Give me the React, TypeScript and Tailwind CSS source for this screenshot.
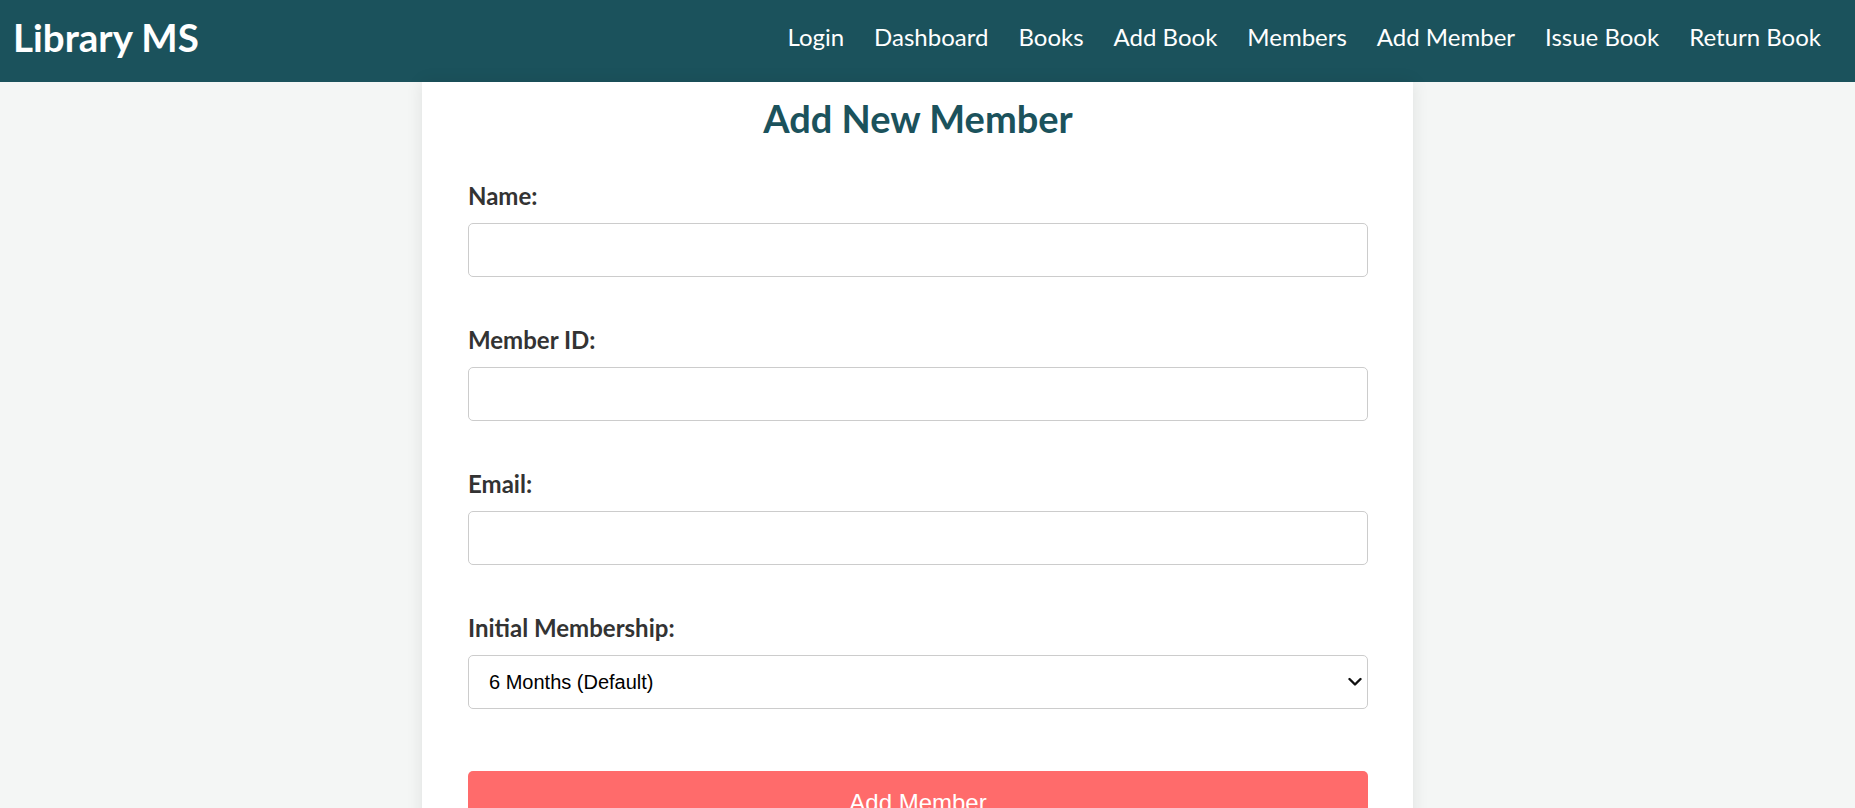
const links = [
  "Login",
  "Dashboard",
  "Books",
  "Add Book",
  "Members",
  "Add Member",
  "Issue Book",
  "Return Book",
];

function Field({ label, type = "text" }: { label: string; type?: string }) {
  return (
    <div className="mb-[48px]">
      <label className="block text-[24px] font-bold leading-[30px] text-[#333]">
        {label}
      </label>
      <input
        type={type}
        className="mt-[12px] block h-[54px] w-full rounded-[5px] border border-[#cccccc] bg-white px-[15px] font-['Liberation_Sans',Arial,sans-serif] text-[20px] text-black outline-none"
      />
    </div>
  );
}

export default function App() {
  return (
    <div className="h-[808px] overflow-hidden bg-[#f4f6f5] font-['Lato',sans-serif]">
      <nav className="flex h-[82px] items-center justify-between bg-[#1b525c] pb-[8px] pl-[13px] pr-[34px]">
        <div className="text-[38.5px] font-bold leading-none text-white">
          Library MS
        </div>
        <ul className="flex gap-[30px] text-[24px] text-white">
          {links.map((link) => (
            <li key={link}>
              <a href="#">{link}</a>
            </li>
          ))}
        </ul>
      </nav>

      <main className="flex justify-center pr-[20px]">
        <div className="w-[991px] bg-white pb-[40px] pl-[46px] pr-[45px] pt-[12px] shadow-[0_0_16px_rgba(0,0,0,0.09)]">
          <h2 className="mb-[39px] text-center text-[38px] font-bold leading-[48px] text-[#1b525c]">
            Add New Member
          </h2>

          <form onSubmit={(e) => e.preventDefault()}>
            <Field label="Name:" />
            <Field label="Member ID:" />
            <Field label="Email:" type="email" />

            <div className="mb-[62px]">
              <label className="block text-[24px] font-bold leading-[30px] text-[#333]">
                Initial Membership:
              </label>
              <div className="relative mt-[12px]">
                <select
                  defaultValue="6"
                  className="block h-[54px] w-full appearance-none rounded-[5px] border border-[#cccccc] bg-white pl-[20px] pr-[30px] font-['Liberation_Sans',Arial,sans-serif] text-[20px] text-black outline-none"
                >
                  <option value="6">6 Months (Default)</option>
                  <option value="12">12 Months</option>
                  <option value="3">3 Months</option>
                </select>
                <svg
                  className="pointer-events-none absolute right-[6px] top-1/2 -translate-y-1/2"
                  width="14"
                  height="9"
                  viewBox="0 0 14 9"
                  fill="none"
                >
                  <polyline
                    points="1.5,1.5 7,7 12.5,1.5"
                    stroke="#111"
                    strokeWidth="2.4"
                    strokeLinecap="round"
                    strokeLinejoin="round"
                  />
                </svg>
              </div>
            </div>

            <button
              type="submit"
              className="block w-full rounded-[5px] bg-[#ff6b6b] py-[18px] font-['Liberation_Sans',Arial,sans-serif] text-[24px] leading-[28px] text-white"
            >
              Add Member
            </button>
          </form>
        </div>
      </main>
    </div>
  );
}
